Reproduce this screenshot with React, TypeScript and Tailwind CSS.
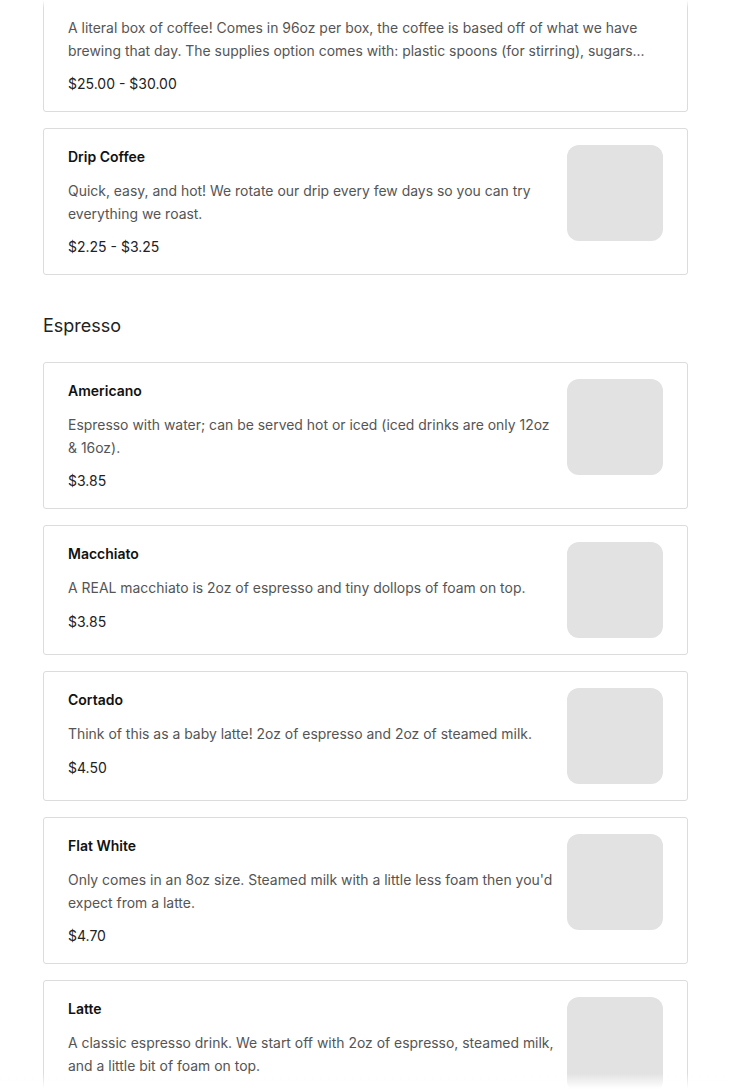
import React from 'react';

// menu data, grouped by section
const coffee = [
  {
    name: 'Box of Coffee',
    desc: 'A literal box of coffee! Comes in 96oz per box, the coffee is based off of what we have brewing that day. The supplies option comes with: plastic spoons (for stirring), sugars...',
    price: '$25.00 - $30.00',
    image: false,
  },
  {
    name: 'Drip Coffee',
    desc: 'Quick, easy, and hot! We rotate our drip every few days so you can try everything we roast.',
    price: '$2.25 - $3.25',
    image: true,
  },
];

const espresso = [
  { name: 'Americano', desc: 'Espresso with water; can be served hot or iced (iced drinks are only 12oz & 16oz).', price: '$3.85', image: true },
  { name: 'Macchiato', desc: 'A REAL macchiato is 2oz of espresso and tiny dollops of foam on top.', price: '$3.85', image: true },
  { name: 'Cortado', desc: 'Think of this as a baby latte! 2oz of espresso and 2oz of steamed milk.', price: '$4.50', image: true },
  { name: 'Flat White', desc: "Only comes in an 8oz size. Steamed milk with a little less foam then you'd expect from a latte.", price: '$4.70', image: true },
  { name: 'Latte', desc: 'A classic espresso drink. We start off with 2oz of espresso, steamed milk, and a little bit of foam on top.', price: '$4.25 - $5.25', image: true },
];

type Item = { name: string; desc: string; price: string; image: boolean };

function MenuCard({ item }: { item: Item }) {
  return (
    <div className="flex gap-3 border border-[#dcdcdc] rounded-[3px] bg-white px-6 py-4">
      <div className="flex-1 min-w-0 pt-px">
        <p className="text-[14px] leading-[22px] font-semibold text-[#111]">{item.name}</p>
        <p className="mt-3 text-[13.94px] leading-[22.5px] text-[#555] line-clamp-2">{item.desc}</p>
        <p className="mt-[11px] text-[14px] leading-[22px] text-[#222]">{item.price}</p>
      </div>
      {item.image && <div className="w-24 h-24 shrink-0 rounded-xl bg-[#e2e2e2]" />}
    </div>
  );
}

export default function App() {
  return (
    <div className="relative min-h-screen bg-white overflow-hidden font-['Inter','Liberation_Sans',sans-serif]">
      <main className="w-[645px] ml-[43px] -mt-[35px] pb-10">
        <div className="flex flex-col gap-4">
          {coffee.map((item) => (
            <MenuCard key={item.name} item={item} />
          ))}
        </div>

        <h2 className="mt-[37px] mb-[22px] text-[18px] leading-[28px] text-[#222]">Espresso</h2>

        <div className="flex flex-col gap-4">
          {espresso.map((item) => (
            <MenuCard key={item.name} item={item} />
          ))}
        </div>
      </main>

      {/* scroll fades */}
      <div className="fixed top-0 left-0 right-0 h-2 bg-gradient-to-b from-white to-transparent pointer-events-none" />
      <div className="fixed bottom-0 left-0 right-0 h-4 bg-gradient-to-t from-white to-transparent pointer-events-none" />
    </div>
  );
}
